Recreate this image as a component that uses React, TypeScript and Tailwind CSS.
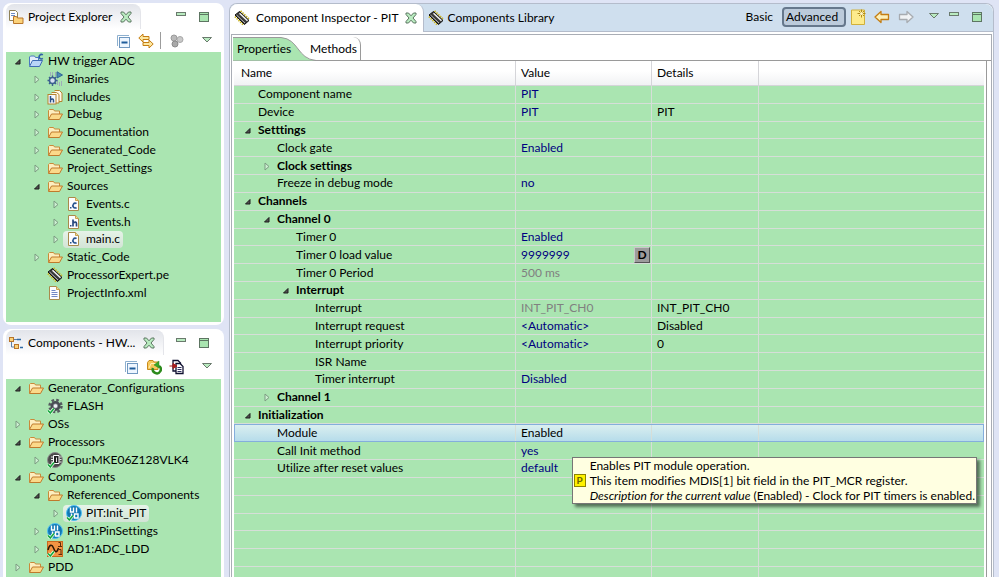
import React from "react";
import clsx from "clsx";

type IconName =
  | "project"
  | "binaries"
  | "includes"
  | "folder"
  | "cfile"
  | "hfile"
  | "chip"
  | "xml"
  | "gear"
  | "cpu"
  | "pins"
  | "adc";

type TreeItem = {
  label: string;
  icon: IconName;
  level: number;
  state?: "open" | "closed";
  selected?: boolean;
};

type Property = {
  name: string;
  level: number;
  value?: string;
  details?: string;
  state?: "open" | "closed";
  bold?: boolean;
  muted?: boolean;
  radix?: boolean;
  selected?: boolean;
};

const projectTree: TreeItem[] = [
  { label: "HW trigger ADC", icon: "project", level: 0, state: "open" },
  { label: "Binaries", icon: "binaries", level: 1, state: "closed" },
  { label: "Includes", icon: "includes", level: 1, state: "closed" },
  { label: "Debug", icon: "folder", level: 1, state: "closed" },
  { label: "Documentation", icon: "folder", level: 1, state: "closed" },
  { label: "Generated_Code", icon: "folder", level: 1, state: "closed" },
  { label: "Project_Settings", icon: "folder", level: 1, state: "closed" },
  { label: "Sources", icon: "folder", level: 1, state: "open" },
  { label: "Events.c", icon: "cfile", level: 2, state: "closed" },
  { label: "Events.h", icon: "hfile", level: 2, state: "closed" },
  { label: "main.c", icon: "cfile", level: 2, state: "closed", selected: true },
  { label: "Static_Code", icon: "folder", level: 1, state: "closed" },
  { label: "ProcessorExpert.pe", icon: "chip", level: 1 },
  { label: "ProjectInfo.xml", icon: "xml", level: 1 },
];

const componentTree: TreeItem[] = [
  { label: "Generator_Configurations", icon: "folder", level: 0, state: "open" },
  { label: "FLASH", icon: "gear", level: 1 },
  { label: "OSs", icon: "folder", level: 0, state: "closed" },
  { label: "Processors", icon: "folder", level: 0, state: "open" },
  { label: "Cpu:MKE06Z128VLK4", icon: "cpu", level: 1, state: "closed" },
  { label: "Components", icon: "folder", level: 0, state: "open" },
  { label: "Referenced_Components", icon: "folder", level: 1, state: "open" },
  { label: "PIT:Init_PIT", icon: "pins", level: 2, state: "closed", selected: true },
  { label: "Pins1:PinSettings", icon: "pins", level: 1, state: "closed" },
  { label: "AD1:ADC_LDD", icon: "adc", level: 1, state: "closed" },
  { label: "PDD", icon: "folder", level: 0, state: "closed" },
];

const properties: Property[] = [
  { name: "Component name", level: 0, value: "PIT" },
  { name: "Device", level: 0, value: "PIT", details: "PIT" },
  { name: "Setttings", level: 0, state: "open", bold: true },
  { name: "Clock gate", level: 1, value: "Enabled" },
  { name: "Clock settings", level: 1, state: "closed", bold: true },
  { name: "Freeze in debug mode", level: 1, value: "no" },
  { name: "Channels", level: 0, state: "open", bold: true },
  { name: "Channel 0", level: 1, state: "open", bold: true },
  { name: "Timer 0", level: 2, value: "Enabled" },
  { name: "Timer 0 load value", level: 2, value: "9999999", radix: true },
  { name: "Timer 0 Period", level: 2, value: "500 ms", muted: true },
  { name: "Interrupt", level: 2, state: "open", bold: true },
  { name: "Interrupt", level: 3, value: "INT_PIT_CH0", details: "INT_PIT_CH0", muted: true },
  { name: "Interrupt request", level: 3, value: "<Automatic>", details: "Disabled" },
  { name: "Interrupt priority", level: 3, value: "<Automatic>", details: "0" },
  { name: "ISR Name", level: 3 },
  { name: "Timer interrupt", level: 3, value: "Disabled" },
  { name: "Channel 1", level: 1, state: "closed", bold: true },
  { name: "Initialization", level: 0, state: "open", bold: true },
  { name: "Module", level: 1, value: "Enabled", selected: true },
  { name: "Call Init method", level: 1, value: "yes" },
  { name: "Utilize after reset values", level: 1, value: "default" },
];

const emptyRows = [1, 2, 3, 4, 5, 6];

const treeIndent = ["pl-[8px]", "pl-[27px]", "pl-[46px]"];
const rowIndent = ["pl-[10px]", "pl-[29px]", "pl-[48px]", "pl-[67px]"];

function CheckMark() {
  return (
    <>
      <path d="M1 12.5l2.3 2.5L7 10.5" fill="none" stroke="#e9ffe9" strokeWidth="3" />
      <path d="M1 12.5l2.3 2.5L7 10.5" fill="none" stroke="#12a53a" strokeWidth="1.5" />
    </>
  );
}

function Icon({ name }: { name: IconName }) {
  return (
    <svg viewBox="0 0 16 16" className="size-4 shrink-0" aria-hidden="true">
      {name === "folder" && (
        <>
          <path d="M1.5 13V4.5l1-1h4l1 1.5h5V8" fill="#fdeec0" stroke="#c98a3a" />
          <path d="M1.5 13.5L4.5 8H15.5l-3 5.5z" fill="#fbd98a" stroke="#bf7a2c" strokeLinejoin="round" />
        </>
      )}
      {name === "project" && (
        <>
          <path d="M1.5 12.5V4l1-1h4l1 1.5h3V8" fill="#e4eefb" stroke="#4a78c0" />
          <path d="M1.5 13.5L4.5 7.5H14.5l-3 6z" fill="#b9d6f8" stroke="#3f6cb5" strokeLinejoin="round" />
          <path d="M14.8 2a2.2 2.2 0 1 0 0 3.4" fill="none" stroke="#2f5ea8" strokeWidth="1.6" />
        </>
      )}
      {name === "binaries" && (
        <>
          <path d="M3.5 1v4M5.5 1v4M8.5 1v4M10.5 9v5M12.5 11v4M14.5 10v5" stroke="#9fadb9" />
          <circle cx="5.5" cy="9.5" r="3" fill="#d5e0f0" stroke="#3c608f" strokeWidth="1.5" />
          <path
            d="M5.5 4.500v2M5.5 12.500v2.500M.5 9.500h2M8.500 9.500h2M2 6l1.500 1.500M9 6L7.500 7.500M2 13l1.500-1.500M9 13l-1.500-1.500"
            stroke="#3c608f"
            strokeWidth="1.4"
          />
          <path d="M10 .8l5.500 3.200L10 7z" fill="#4b8ab8" stroke="#2f6595" />
        </>
      )}
      {name === "includes" && (
        <>
          <path d="M7.500 1.500h5l2.500 2.500v8.500h-4" fill="#fff8e8" stroke="#b5832f" />
          <path d="M4.500 3.500h5l2.500 2v8.500H9" fill="#fff8e8" stroke="#b5832f" />
          <rect x="1" y="5.500" width="8" height="9.500" fill="#f4f8ff" stroke="#b5832f" />
          <path d="M3.500 7v6.500M3.500 10.800q3-2 3 .7v2" fill="none" stroke="#2b4f86" strokeWidth="1.500" />
        </>
      )}
      {(name === "cfile" || name === "hfile" || name === "xml") && (
        <>
          <path d="M2.500 1.500h7l3 3v10h-10z" fill="#fdfdff" stroke="#a98a4c" />
          <path d="M9.500 1.500v3h3" fill="#f0d998" stroke="#c8a24e" />
        </>
      )}
      {name === "cfile" && (
        <>
          <path d="M10.500 7.700a2.200 2.400 0 1 0 0 3.800" fill="none" stroke="#2a5590" strokeWidth="1.700" />
          <rect x="4" y="11" width="1.500" height="1.500" fill="#2a5590" />
        </>
      )}
      {name === "hfile" && (
        <>
          <path d="M7 5.500v7M7 9q3.500-2 3.500 .700V12.500" fill="none" stroke="#2a4a80" strokeWidth="1.700" />
          <rect x="4" y="11" width="1.500" height="1.500" fill="#2a4a80" />
        </>
      )}
      {name === "xml" && <path d="M4.500 5.500h4M4.500 7.500h6M4.500 9.500h6M4.500 11.500h6" stroke="#7287c4" />}
      {name === "chip" && (
        <>
          <path d="M1 6.500l8.500 8.500" stroke="#c9b52c" strokeWidth="2" strokeDasharray="1.500 1" />
          <path d="M6.500 1L15.500 9.500" stroke="#c9b52c" strokeWidth="2" strokeDasharray="1.500 1" />
          <path d="M1 5L5.500 1.500l9.500 9L10.500 14.500z" fill="#3a3a3a" stroke="#101010" />
          <path d="M2.500 5l8.500 8" stroke="#b9b9b9" />
          <path d="M5.500 3.200l8 7.500" stroke="#f2f2f2" strokeWidth="1.500" />
        </>
      )}
      {name === "gear" && (
        <>
          <circle cx="8.500" cy="8" r="6" fill="none" stroke="#565a60" strokeWidth="2.500" strokeDasharray="2.600 2.112" />
          <circle cx="8.500" cy="8" r="3.700" fill="#9ba0a8" stroke="#4a4e55" strokeWidth="2.600" />
          <circle cx="8.500" cy="8" r="1.800" fill="#eef1f4" />
          <CheckMark />
        </>
      )}
      {name === "cpu" && (
        <>
          <circle cx="8" cy="8" r="7.500" fill="#4a4a4a" stroke="#8b8b8b" />
          <path d="M6.500 3.500h5.500v8H6.500z" fill="#222" stroke="#fff" />
          <path d="M9.500 5.500v4.500M4 5h2M4 7.500h2M4 10h2M12.500 5h2M12.500 7.500h2M12.500 10h2" stroke="#e6e6e6" />
          <CheckMark />
        </>
      )}
      {name === "pins" && (
        <>
          <circle cx="8" cy="8" r="7.500" fill="#1178b4" stroke="#4fc0f0" />
          <path d="M4.500 2.500v4.500h3V2.500M10.500 2.500v5M5.500 8.500V13M8.500 9v4h3.500V9z" fill="none" stroke="#fff" strokeWidth="1.400" />
          <CheckMark />
        </>
      )}
      {name === "adc" && (
        <>
          <rect x=".5" y=".5" width="15" height="15" fill="#f39443" stroke="#c8691f" />
          <path d="M1 9C2.500 3 5 3 6.500 7s3 6 5 0" fill="none" stroke="#2a1505" strokeWidth="1.500" />
          <path d="M11.500 1.500h2v4M11 5.500h4M12 8.500h2v5M11.500 13.500h3.500" fill="none" stroke="#5b2c0a" />
          <CheckMark />
        </>
      )}
    </svg>
  );
}

function Expander({ state, label }: { state?: "open" | "closed"; label: string }) {
  if (!state) return <span className="w-2 shrink-0" />;
  return (
    <button type="button" aria-label={`Toggle ${label}`} aria-expanded={state === "open"} className="w-2 shrink-0">
      <svg viewBox="0 0 8 10" className="block h-[10px] w-2" aria-hidden="true">
        {state === "open" ? (
          <path d="M6 3.500v4.500H1.500z" fill="#505050" stroke="#1c1c1c" strokeLinejoin="round" />
        ) : (
          <path d="M2 2v7l4-3.500z" fill="#cdf0d2" stroke="#7d9b82" />
        )}
      </svg>
    </button>
  );
}

function CloseIcon() {
  return (
    <svg viewBox="0 0 12 12" className="size-3" aria-hidden="true">
      <path
        d="M1 1h2.500L6 3.800 8.500 1H11v1.500L8 6l3 3.500V11H8.500L6 8.200 3.500 11H1V9.500L4 6 1 2.500z"
        fill="#b9ebc0"
        stroke="#5b7560"
      />
    </svg>
  );
}

function MinimizeIcon() {
  return (
    <svg viewBox="0 0 12 12" className="size-3" aria-hidden="true">
      <rect x="1.500" y="1.500" width="9" height="3" fill="#b9ebc0" stroke="#6a7a6d" />
    </svg>
  );
}

function MaximizeIcon() {
  return (
    <svg viewBox="0 0 12 12" className="size-3" aria-hidden="true">
      <rect x="1.500" y="1.500" width="9" height="9" fill="#a9e5b0" stroke="#5d7562" />
      <path d="M1.500 3.500h9" stroke="#5d7562" />
    </svg>
  );
}

function MenuIcon() {
  return (
    <svg viewBox="0 0 12 12" className="size-3" aria-hidden="true">
      <path d="M1.500 2.500h9L6 7z" fill="#b9ebc0" stroke="#6a7a6d" />
    </svg>
  );
}

function CollapseAllIcon() {
  return (
    <svg viewBox="0 0 16 16" className="size-4" aria-hidden="true">
      <path d="M1.500 13V2.500H13" fill="none" stroke="#8eb0cf" />
      <rect x="3.500" y="4.500" width="10" height="10" fill="#eef6ff" stroke="#7098c0" />
      <path d="M5.500 9.500h6" stroke="#1f5c9a" strokeWidth="2" />
    </svg>
  );
}

function Arrow({ direction, muted }: { direction: "back" | "forward"; muted?: boolean }) {
  return (
    <svg viewBox="0 0 16 16" className="size-4" aria-hidden="true">
      <path
        d={
          direction === "back"
            ? "M1 8L7 2.500v3h7.500v5H7v3z"
            : "M15 8L9 2.500v3H1.500v5H9v3z"
        }
        fill={muted ? "#f1f3f5" : "#fdf0b8"}
        stroke={muted ? "#a7abb0" : "#c47d12"}
        strokeWidth="1.300"
        strokeLinejoin="round"
      />
    </svg>
  );
}

function Tree({ items, label, className }: { items: TreeItem[]; label: string; className: string }) {
  return (
    <ul aria-label={label} className={clsx("grid auto-rows-fr", className)}>
      {items.map((item) => (
        <li key={item.label} className={clsx("flex min-h-0 items-center gap-[3px]", treeIndent[item.level])}>
          <Expander state={item.state} label={item.label} />
          <span
            className={clsx(
              "flex h-[17px] items-center gap-1 rounded-sm px-[3px] whitespace-nowrap",
              item.selected && "bg-gradient-to-b from-[#e6f3e8] to-[#d3e4d6]"
            )}
          >
            <Icon name={item.icon} />
            {item.label}
          </span>
        </li>
      ))}
    </ul>
  );
}

function ViewHeader({ title, icon }: { title: string; icon: React.ReactNode }) {
  return (
    <header className="flex h-[25px] shrink-0 items-center justify-between pr-[11px]">
      <h2 className="flex h-full items-center gap-1 rounded-t-lg border-r border-[#e4e5ea] bg-gradient-to-b from-[#e2e4ea] to-white pr-2 pl-[2px] font-normal">
        {icon}
        {title}
        <button type="button" aria-label={`Close ${title}`} className="ml-1">
          <CloseIcon />
        </button>
      </h2>
      <div className="flex gap-[11px]">
        <button type="button" aria-label="Minimize">
          <MinimizeIcon />
        </button>
        <button type="button" aria-label="Maximize">
          <MaximizeIcon />
        </button>
      </div>
    </header>
  );
}

function ProjectExplorer() {
  return (
    <section className="flex flex-col rounded-lg border-[3px] border-t border-white bg-white">
      <ViewHeader
        title="Project Explorer"
        icon={
          <svg viewBox="0 0 16 16" className="size-4" aria-hidden="true">
            <path d="M1.500 1.500h6l2 2v8h-8z" fill="#fff" stroke="#8f8256" />
            <path d="M3 4.500h4M3 6.500h4" stroke="#6d8cc4" />
            <path d="M5.500 14.500v-7h3l1 1.500h5.500v5.500z" fill="#fbd27a" stroke="#b9762a" />
          </svg>
        }
      />
      <div className="flex h-[23px] items-center justify-end pr-2">
        <button type="button" aria-label="Collapse All" className="mr-[6px]">
          <CollapseAllIcon />
        </button>
        <button type="button" aria-label="Link with Editor" className="mr-[6px]">
          <svg viewBox="0 0 16 16" className="size-4" aria-hidden="true">
            <path d="M.8 5L5 1v2.500h6v3H5V9z" fill="#fde7a0" stroke="#c47d12" strokeLinejoin="round" />
            <path d="M15.200 11L11 7v2.500H5v3h6V15z" fill="#fde7a0" stroke="#c47d12" strokeLinejoin="round" />
          </svg>
        </button>
        <span className="h-[17px] w-px bg-[#9c9c9c]" />
        <button type="button" aria-label="Focus on Active Task" className="ml-2">
          <svg viewBox="0 0 16 16" className="size-4" aria-hidden="true">
            <circle cx="5" cy="5" r="3" fill="#b9b9b9" stroke="#9a9a9a" />
            <circle cx="11" cy="6.500" r="3" fill="#c9c9c9" stroke="#a8a8a8" />
            <circle cx="6" cy="11" r="3" fill="#a9a9a9" stroke="#8b8b8b" />
          </svg>
        </button>
        <button type="button" aria-label="View Menu" className="ml-4">
          <MenuIcon />
        </button>
      </div>
      <div className="bg-[#aae5b1] pb-5">
        <Tree items={projectTree} label="Project Explorer" className="h-[250px]" />
      </div>
    </section>
  );
}

function ComponentsView() {
  return (
    <section className="flex min-h-0 flex-1 flex-col rounded-t-lg border-x-[3px] border-t border-white bg-white">
      <ViewHeader
        title="Components - HW..."
        icon={
          <svg viewBox="0 0 16 16" className="size-4" aria-hidden="true">
            <path d="M3.500 5v7h4M6 4.500h3" fill="none" stroke="#5d7fa8" />
            <rect x="1.500" y="2.500" width="4" height="4" fill="#fbd27a" stroke="#b9762a" />
            <rect x="6.500" y="9.500" width="4" height="4" fill="#fbd27a" stroke="#b9762a" />
            <path d="M9 4.500h4M12 12.500h3" stroke="#2f6aa5" strokeWidth="1.500" />
          </svg>
        }
      />
      <div className="flex h-[24px] shrink-0 items-center justify-end pr-2">
        <button type="button" aria-label="Collapse All" className="mr-[6px]">
          <CollapseAllIcon />
        </button>
        <button type="button" aria-label="Generate Code" className="mr-[6px]">
          <svg viewBox="0 0 16 16" className="size-4" aria-hidden="true">
            <path d="M1.500 10.500V3.500l1.500-2h4l1 1.500h4v7.500z" fill="#f6c95c" stroke="#c98a1c" />
            <path d="M3 9l2-4.500h8" fill="none" stroke="#fff0b8" />
            <path d="M7 9a4 4 0 1 0 6-2" fill="none" stroke="#2c8a1c" strokeWidth="2.500" />
            <path d="M13 2v7L8 6z" fill="#3aa528" stroke="#2c8a1c" strokeWidth=".5" />
          </svg>
        </button>
        <button type="button" aria-label="Import" className="ml-px">
          <svg viewBox="0 0 16 16" className="size-4" aria-hidden="true">
            <path d="M4 1.500h5l2.500 2.500v8H4z" fill="#fff" stroke="#101030" strokeWidth="1.300" />
            <path d="M7 4.500h4l3 3v7H7z" fill="#fff" stroke="#101030" strokeWidth="1.300" />
            <path d="M8.500 8.500h4M8.500 10.500h4M8.500 12.500h4" stroke="#303060" />
            <path d="M.5 7h4M4 4.500L8 7l-4 2.500z" fill="#a81c1c" stroke="#a81c1c" />
          </svg>
        </button>
        <button type="button" aria-label="View Menu" className="ml-4">
          <MenuIcon />
        </button>
      </div>
      <div className="min-h-0 flex-1 bg-[#aae5b1]">
        <Tree items={componentTree} label="Components" className="h-[197px]" />
      </div>
    </section>
  );
}

function EditorTabs() {
  return (
    <header className="flex h-[28px] shrink-0 items-center rounded-t-lg border-b border-[#b4bccb] bg-[#cfdfee]">
      <div role="tablist" className="flex h-[28px] items-center self-start">
        <button
          type="button"
          role="tab"
          aria-selected="true"
          className="flex h-full items-center gap-[6px] rounded-t-lg border-r border-[#b4bccb] bg-white pr-[6px] pl-1"
        >
          <Icon name="chip" />
          Component Inspector - PIT
          <CloseIcon />
        </button>
        <button type="button" role="tab" aria-selected="false" className="flex h-full items-center gap-1 pl-1">
          <Icon name="chip" />
          Components Library
        </button>
      </div>
      <div className="ml-auto flex items-center pr-[10px] pb-px">
        <button type="button" className="mr-[9px]">
          Basic
        </button>
        <button
          type="button"
          aria-pressed="true"
          className="mr-1 h-[20px] w-[64px] rounded-sm border-2 border-[#66788c] bg-[#bccbdb] pl-[2px] text-left leading-4"
        >
          Advanced
        </button>
        <button type="button" aria-label="New" className="mr-2">
          <svg viewBox="0 0 16 16" className="size-4" aria-hidden="true">
            <path d="M1.500 1h13v14.500h-13z" fill="#fdeb8c" stroke="#d0b03c" />
            <path d="M11.500 .5v8M7.500 4.500h8M9 2l5 5M14 2L9 7" stroke="#b18a1c" />
            <circle cx="11.500" cy="4.500" r="1.500" fill="#fff7cc" />
          </svg>
        </button>
        <button type="button" aria-label="Back" className="mr-2">
          <Arrow direction="back" />
        </button>
        <button type="button" aria-label="Forward" className="mr-[14px]">
          <Arrow direction="forward" muted />
        </button>
        <span className="flex gap-2">
          <button type="button" aria-label="View Menu">
            <MenuIcon />
          </button>
          <button type="button" aria-label="Minimize">
            <MinimizeIcon />
          </button>
          <button type="button" aria-label="Maximize" className="ml-[3px]">
            <MaximizeIcon />
          </button>
        </span>
      </div>
    </header>
  );
}

function PropertyTabs() {
  return (
    <div role="tablist" className="flex h-[24px] shrink-0 border-b border-[#9a9a9a]">
      <button type="button" role="tab" aria-selected="true" className="relative w-[77px] pl-1 text-left">
        <svg viewBox="0 0 84 24" className="absolute top-0 left-0 h-[24px] w-[84px]" aria-hidden="true">
          <path d="M0 .5H48C66 2 64 22 83 23.500H0z" fill="#aae5b1" />
          <path d="M0 .5H48C66 2 64 22 83 23.500" fill="none" stroke="#9a9a9a" />
        </svg>
        <span className="relative">Properties</span>
      </button>
      <button
        type="button"
        role="tab"
        aria-selected="false"
        className="relative rounded-tr-lg border-r border-[#9a9a9a] pr-[3px]"
      >
        Methods
      </button>
    </div>
  );
}

function PropertyRow({ property }: { property: Property }) {
  const cell = "border-r border-b border-[#d6ded8] p-0";
  return (
    <tr
      className={clsx(
        property.selected &&
          "bg-gradient-to-b from-[#dcf0f0] to-[#b4dbea] outline outline-1 -outline-offset-1 outline-[#84aedc]"
      )}
    >
      <th scope="row" className={clsx(cell, property.bold ? "font-bold" : "font-normal")}>
        <span className={clsx("flex items-center gap-[6px]", rowIndent[property.level])}>
          <Expander state={property.state} label={property.name} />
          {property.name}
        </span>
      </th>
      <td
        className={clsx(
          cell,
          "pl-[5px]",
          property.muted ? "text-[#808080]" : property.selected ? "text-black" : "text-[#000080]"
        )}
      >
        <span className="flex items-center justify-between">
          {property.value}
          {property.radix && (
            <button
              type="button"
              aria-label="Decimal radix"
              className="mr-px h-4 w-4 border border-t-[#c8c8c8] border-r-[#555] border-b-[#555] border-l-[#c8c8c8] bg-[#9c9c9c] leading-[14px] font-bold text-black"
            >
              D
            </button>
          )}
        </span>
      </td>
      <td className={clsx(cell, "pl-[5px]")}>{property.details}</td>
      <td className="border-b border-[#d6ded8] p-0" />
    </tr>
  );
}

function PropertyTable() {
  const head = "border-r border-b border-[#d5d5d9] p-0 font-normal";
  return (
    <table className="h-[524px] w-full table-fixed border-separate border-spacing-0 bg-[#aae5b1] text-left whitespace-nowrap">
      <colgroup>
        <col className="w-[282px]" />
        <col className="w-[136px]" />
        <col className="w-[107px]" />
        <col />
      </colgroup>
      <thead className="bg-gradient-to-b from-white from-40% to-[#f0f1f3]">
        <tr className="h-[25px]">
          <th scope="col" className={clsx(head, "pl-[7px]")}>
            Name
          </th>
          <th scope="col" className={clsx(head, "pl-[5px]")}>
            Value
          </th>
          <th scope="col" className={clsx(head, "pl-[5px]")}>
            Details
          </th>
          <td className="border-b border-[#d5d5d9] p-0" />
        </tr>
      </thead>
      <tbody className="leading-4">
        {properties.map((property, index) => (
          <PropertyRow key={index} property={property} />
        ))}
        {emptyRows.map((row) => (
          <PropertyRow key={row} property={{ name: "\u00a0", level: 0 }} />
        ))}
      </tbody>
    </table>
  );
}

function ModuleTooltip() {
  return (
    <div
      role="tooltip"
      className="absolute top-[396px] right-[9px] grid grid-cols-[13px_auto] items-center gap-x-[3px] border border-[#767676] bg-[#ffffe1] pr-px pl-px leading-[15px] whitespace-nowrap shadow-[3px_3px_3px_rgba(0,0,0,0.5)]"
    >
      <span />
      <p>Enables PIT module operation.</p>
      <span className="flex h-[13px] w-3 items-center justify-center border border-[#8c8400] bg-[#fff200] text-[10px] font-bold text-[#6b6500]">
        P
      </span>
      <p>This item modifies MDIS[1] bit field in the PIT_MCR register.</p>
      <span />
      <p>
        <em>Description for the current value</em> (Enabled) - Clock for PIT timers is enabled.
      </p>
    </div>
  );
}

export default function App() {
  return (
    <div className="flex h-screen gap-[5px] overflow-hidden bg-[#dfe4f5] pt-[3px] pr-[5px] pl-[3px] font-['Lato','Open_Sans',sans-serif] text-[12px] leading-4 text-black [font-variant-ligatures:none]">
      <aside className="flex w-[221px] shrink-0 flex-col gap-1">
        <ProjectExplorer />
        <ComponentsView />
      </aside>
      <main className="flex min-w-0 flex-1 flex-col rounded-t-lg border border-b-0 border-[#b4bccb] bg-white">
        <EditorTabs />
        <div className="mx-px mt-[2px] flex min-h-0 flex-1 flex-col border-x border-t border-[#a9adb5] pt-[2px] pl-px">
          <PropertyTabs />
          <div className="relative mr-[4px] min-h-0 flex-1 border-r border-[#9a9a9a] pr-[2px] pl-px">
            <PropertyTable />
            <ModuleTooltip />
          </div>
        </div>
      </main>
    </div>
  );
}
